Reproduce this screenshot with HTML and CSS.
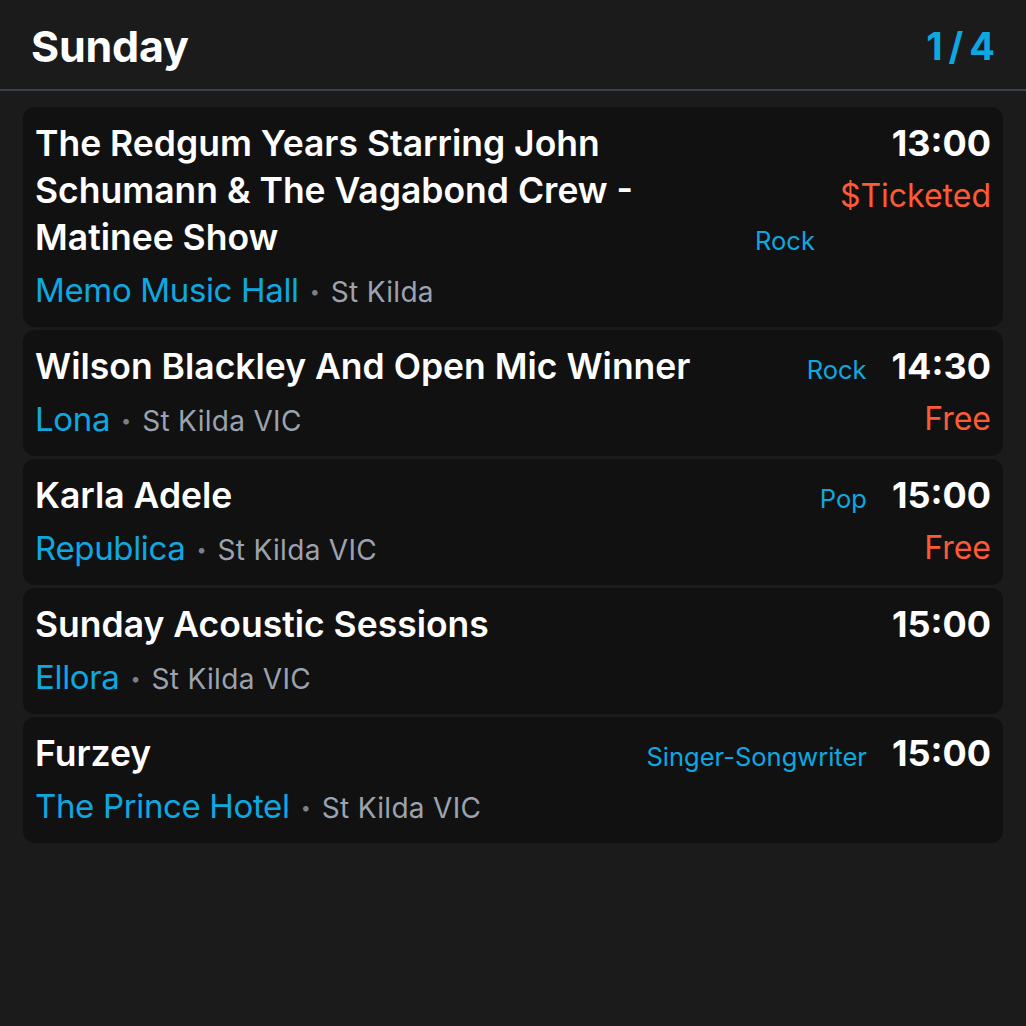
FILE: index.html
```html
<!DOCTYPE html>
<html lang="en">
<head>
<meta charset="utf-8">
<title>Sunday</title>
<link rel="stylesheet" href="styles.css">
</head>
<body>
<div class="app">
  <header class="header">
    <h1 class="day">Sunday</h1>
    <div class="pager">1/4</div>
  </header>
  <main class="list">
    <article class="card">
      <div class="main">
        <div class="head">
          <div class="title">The Redgum Years Starring John Schumann &amp; The Vagabond Crew - Matinee Show</div>
          <div class="genre">Rock</div>
        </div>
        <div class="venue"><span class="place">Memo Music Hall</span><span class="dot">•</span><span class="loc">St Kilda</span></div>
      </div>
      <div class="side">
        <div class="time">13:00</div>
        <div class="price">$Ticketed</div>
      </div>
    </article>
    <article class="card">
      <div class="main">
        <div class="head">
          <div class="title">Wilson Blackley And Open Mic Winner</div>
          <div class="genre">Rock</div>
        </div>
        <div class="venue"><span class="place">Lona</span><span class="dot">•</span><span class="loc">St Kilda VIC</span></div>
      </div>
      <div class="side">
        <div class="time">14:30</div>
        <div class="price">Free</div>
      </div>
    </article>
    <article class="card">
      <div class="main">
        <div class="head">
          <div class="title">Karla Adele</div>
          <div class="genre">Pop</div>
        </div>
        <div class="venue"><span class="place">Republica</span><span class="dot">•</span><span class="loc">St Kilda VIC</span></div>
      </div>
      <div class="side">
        <div class="time">15:00</div>
        <div class="price">Free</div>
      </div>
    </article>
    <article class="card">
      <div class="main">
        <div class="head">
          <div class="title">Sunday Acoustic Sessions</div>
        </div>
        <div class="venue"><span class="place">Ellora</span><span class="dot">•</span><span class="loc">St Kilda VIC</span></div>
      </div>
      <div class="side">
        <div class="time">15:00</div>
      </div>
    </article>
    <article class="card">
      <div class="main">
        <div class="head">
          <div class="title">Furzey</div>
          <div class="genre">Singer-Songwriter</div>
        </div>
        <div class="venue"><span class="place">The Prince Hotel</span><span class="dot">•</span><span class="loc">St Kilda VIC</span></div>
      </div>
      <div class="side">
        <div class="time">15:00</div>
      </div>
    </article>
  </main>
</div>
</body>
</html>
```
FILE: styles.css
```css
* { box-sizing: border-box; }
html, body {
  margin: 0;
  padding: 0;
  background: #1b1b1b;
}
body {
  font-family: Inter, "Noto Sans", "Liberation Sans", sans-serif;
  color: #ffffff;
  height: 1026px;
}
.header {
  height: 91px;
  display: flex;
  align-items: center;
  justify-content: space-between;
  padding: 3px 31px 0 31px;
  border-bottom: 2px solid #3b414d;
}
.day {
  margin: 0;
  font-size: 43px;
  font-weight: 700;
  letter-spacing: -0.2px;
  line-height: 1;
}
.pager {
  font-size: 38px;
  font-weight: 700;
  color: #0ea8e0;
  line-height: 1;
  letter-spacing: 6px;
  margin-right: -6px;
}
.list {
  display: flex;
  flex-direction: column;
  gap: 3px;
  padding: 16px 23px;
}
.card {
  background: #111111;
  border-radius: 12px;
  padding: 13px 12px 12px 12px;
  display: flex;
  gap: 25px;
}
.main {
  flex: 1;
  min-width: 0;
}
.head {
  display: flex;
  align-items: last baseline;
  gap: 16px;
}
.title {
  flex: 1;
  font-size: 35.5px;
  font-weight: 600;
  line-height: 47px;
}
.genre {
  font-size: 25.5px;
  color: #0ea8e0;
  line-height: 1;
  white-space: nowrap;
}
.venue {
  margin-top: 4px;
  font-size: 33px;
  line-height: 50px;
  height: 50px;
  white-space: nowrap;
}
.place {
  color: #0ea8e0;
  letter-spacing: -0.35px;
}
.dot {
  color: #7b818c;
  font-size: 18px;
  line-height: 1;
  margin: 0 11px;
  vertical-align: 4px;
}
.loc {
  color: #9ca3af;
  font-size: 28px;
  line-height: 1;
  letter-spacing: 0.3px;
}
.side {
  display: flex;
  flex-direction: column;
  align-items: flex-end;
}
.time {
  font-size: 36px;
  font-weight: 700;
  line-height: 47px;
}
.price {
  margin-top: 4px;
  font-size: 32px;
  line-height: 50px;
  color: #ff5a36;
}
```
